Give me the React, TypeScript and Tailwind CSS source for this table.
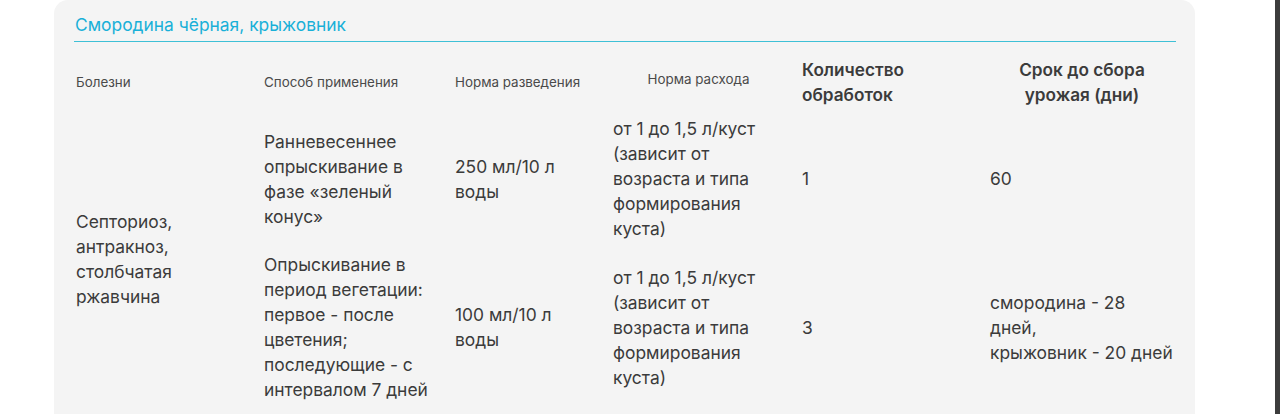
import React from "react";

const font = { fontFamily: "Inter, 'Noto Sans', sans-serif" };

export default function App() {
  return (
    <div className="flex w-[1280px] h-[414px] overflow-hidden bg-white" style={font}>
      <div className="w-[54px] shrink-0" />
      <div className="w-[1141px] shrink-0 bg-[#f4f4f4] rounded-t-[14px] pl-[20px] pr-[19px] pt-[12px]">
        <h2 className="text-[17.4px] leading-[25px] text-[#19b0d8] pl-[1px] pb-[4px]">Смородина чёрная, крыжовник</h2>
        <div className="h-px bg-[#3ec0d6]" />
        <table className="mt-[9px] w-[1102px] table-fixed border-collapse text-[#3b3b3b]">
          <colgroup>
            <col className="w-[188px]" />
            <col className="w-[191px]" />
            <col className="w-[158px]" />
            <col className="w-[189px]" />
            <col className="w-[188px]" />
            <col className="w-[188px]" />
          </colgroup>
          <thead>
            <tr className="align-middle">
              <th className="text-left font-normal text-[13.4px] leading-[18px] text-[#4a4a4a] pl-[2px] pt-[5.5px] pb-[4px]">Болезни</th>
              <th className="text-left font-normal text-[13.4px] leading-[18px] text-[#4a4a4a] pl-[2px] pt-[5.5px] pb-[4px]">Способ применения</th>
              <th className="text-left font-normal text-[13.4px] leading-[18px] text-[#4a4a4a] pl-[2px] pt-[5.5px] pb-[4px]">Норма разведения</th>
              <th className="text-center font-normal text-[13.4px] leading-[18px] text-[#4a4a4a] pr-[14px] pt-[5.5px] pb-[10px]">Норма расхода</th>
              <th className="text-left font-semibold text-[17.2px] leading-[25px] text-[#3b3b3b] pl-[2px] pt-[5.5px] pb-[4px]">
                Количество<br />обработок
              </th>
              <th className="text-center font-semibold text-[17.2px] leading-[25px] text-[#3b3b3b] pt-[5.5px] pb-[4px]">
                Срок до сбора<br />урожая (дни)
              </th>
            </tr>
          </thead>
          <tbody className="text-[17.4px] leading-[25px]">
            <tr className="align-middle">
              <td rowSpan={2} className="pl-[2px] py-[5.5px] pr-[10px]">
                Септориоз,<br />антракноз,<br />столбчатая<br />ржавчина
              </td>
              <td className="pl-[2px] py-[5.5px] pr-[10px]">
                Ранневесеннее<br />опрыскивание в<br />фазе «зеленый<br />конус»
              </td>
              <td className="pl-[2px] py-[5.5px]">
                250 мл/10 л<br />воды
              </td>
              <td className="pl-[2px] py-[5.5px]">
                от 1 до 1,5 л/куст<br />(зависит от<br />возраста и типа<br />формирования<br />куста)
              </td>
              <td className="pl-[2px] py-[5.5px]">1</td>
              <td className="pl-[2px] py-[5.5px]">60</td>
            </tr>
            <tr className="align-middle">
              <td className="pl-[2px] py-[5.5px] pr-[10px]">
                Опрыскивание в<br />период вегетации:<br />первое - после<br />цветения;<br />последующие - с<br />интервалом 7 дней
              </td>
              <td className="pl-[2px] py-[5.5px]">
                100 мл/10 л<br />воды
              </td>
              <td className="pl-[2px] py-[5.5px]">
                от 1 до 1,5 л/куст<br />(зависит от<br />возраста и типа<br />формирования<br />куста)
              </td>
              <td className="pl-[2px] py-[5.5px]">3</td>
              <td className="pl-[2px] py-[5.5px]">
                смородина - 28<br />дней,<br />крыжовник - 20 дней
              </td>
            </tr>
          </tbody>
        </table>
      </div>
      <div className="flex-1" />
      <div className="w-[5px] shrink-0 bg-[#3c3c3c]" />
    </div>
  );
}
